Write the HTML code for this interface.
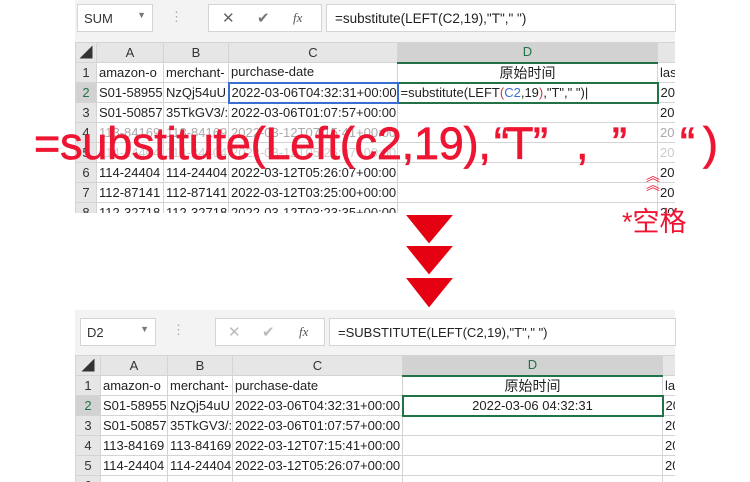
<!DOCTYPE html>
<html><head><meta charset="utf-8"><style>
*{margin:0;padding:0;box-sizing:border-box}
body{width:750px;height:482px;background:#fff;position:relative;overflow:hidden;font-family:"Liberation Sans","Noto Sans CJK SC",sans-serif;font-size:13px;color:#222}
.a{position:absolute}
.fb{background:#f3f3f3}
.box{position:absolute;background:#fff;border:1px solid #d4d4d4}
.clip{position:absolute;overflow:hidden}
.grid{position:absolute;left:0;border-collapse:collapse;table-layout:fixed}
.grid td{border:1px solid #d4d4d4;height:20px;padding:0 2px;white-space:nowrap;overflow:hidden;font-size:13px;line-height:18px}
.grid tr.h td{background:#e6e6e6;text-align:center;color:#333}
.grid td.rh{background:#e6e6e6;text-align:center;color:#333;padding:0}
.red{color:#ee1533;position:absolute;font-size:45px;line-height:56px;white-space:nowrap;top:116px;-webkit-text-stroke:0.7px #ee1533}
</style></head><body>
<!-- top -->
<div class="a fb" style="left:75px;top:0;width:600px;height:42px"></div>
<div class="box" style="left:77px;top:4px;width:76px;height:28px;padding:6px 6px;color:#333">SUM<span style="position:absolute;right:6px;top:5px;font-size:9px;color:#777">▼</span></div>
<div class="a" style="left:170px;top:9px;color:#aaa">⋮</div>
<div class="box" style="left:208px;top:4px;width:114px;height:28px"><span class="a" style="left:13px;top:4px;font-size:15px;color:#666">✕</span><span class="a" style="left:48px;top:4px;font-size:15px;color:#777">✔</span><span class="a" style="left:84px;top:5px;font-style:italic;font-family:'Liberation Serif',serif;color:#555">fx</span></div>
<div class="box" style="left:326px;top:4px;width:350px;height:28px;padding:6px 8px;font-size:13.5px">=substitute(LEFT(C2,19),"T"," ")</div>
<div class="clip" style="left:75px;top:42px;width:600px;height:171px">
<table class="grid" style="top:0;width:640px">
<col style="width:21px"><col style="width:67px"><col style="width:65px"><col style="width:169px"><col style="width:260px"><col style="width:58px">
<tr class="h"><td>◢</td><td>A</td><td>B</td><td>C</td><td style="background:#d2d2d2;border-bottom:2px solid #217346;color:#217346">D</td><td></td></tr>
<tr><td class="rh">1</td><td>amazon-o</td><td>merchant-</td><td>purchase-date</td><td style="text-align:center;font-size:14px">原始时间</td><td>las</td></tr>
<tr><td class="rh" style="background:#d2d2d2;color:#217346">2</td><td>S01-58955</td><td>NzQj54uU</td><td style="border:2px solid #3a6fd1">2022-03-06T04:32:31+00:00</td><td style="border:2px solid #217346">=substitute(LEFT<span style="color:#d2344a">(</span><span style="color:#3a6fd1">C2</span>,19<span style="color:#d2344a">)</span>,"T"," ")|</td><td>202</td></tr>
<tr><td class="rh">3</td><td>S01-50857</td><td>35TkGV3/:</td><td>2022-03-06T01:07:57+00:00</td><td></td><td>202</td></tr>
<tr style="color:#aaa"><td class="rh">4</td><td>113-84169</td><td>113-84169</td><td>2022-03-12T07:15:41+00:00</td><td></td><td>202</td></tr>
<tr style="color:#ccc"><td class="rh">5</td><td>114-24404</td><td>114-24404</td><td>2022-03-12T05:26:07+00:00</td><td></td><td>202</td></tr>
<tr><td class="rh">6</td><td>114-24404</td><td>114-24404</td><td>2022-03-12T05:26:07+00:00</td><td></td><td>202</td></tr>
<tr><td class="rh">7</td><td>112-87141</td><td>112-87141</td><td>2022-03-12T03:25:00+00:00</td><td></td><td>202</td></tr>
<tr><td class="rh">8</td><td>112-32718</td><td>112-32718</td><td>2022-03-12T03:23:35+00:00</td><td></td><td>202</td></tr>
</table></div>
<div class="red" style="left:34px;letter-spacing:-0.2px">=substitute(Left(c2,19),</div>
<div class="red" style="left:494px">“</div>
<div class="red" style="left:506px">T</div>
<div class="red" style="left:533px">”</div>
<div class="red" style="left:576px">,</div>
<div class="red" style="left:612px">”</div>
<div class="red" style="left:680px">“</div>
<div class="red" style="left:703px">)</div>
<div class="a" style="left:646px;top:172px;font-size:14px;line-height:9px;color:#ee1533">︽<br>︽</div>
<div class="a" style="left:622px;top:204px;font-size:27px;line-height:36px;color:#ee1533">*空格</div>
<svg class="a" style="left:403px;top:214px" width="54" height="96" viewBox="0 0 54 96">
<g fill="#e50012" stroke="#fff" stroke-width="2"><polygon points="1,0 52,0 26,31"/><polygon points="1,31 52,31 26,62"/><polygon points="1,63 52,63 26,95"/></g></svg>
<!-- bottom -->
<div class="a fb" style="left:75px;top:310px;width:600px;height:46px"></div>
<div class="box" style="left:80px;top:318px;width:76px;height:28px;padding:6px 6px;color:#333">D2<span style="position:absolute;right:6px;top:5px;font-size:9px;color:#777">▼</span></div>
<div class="a" style="left:172px;top:322px;color:#aaa">⋮</div>
<div class="box" style="left:215px;top:318px;width:110px;height:28px"><span class="a" style="left:12px;top:4px;font-size:15px;color:#bbb">✕</span><span class="a" style="left:46px;top:4px;font-size:15px;color:#bbb">✔</span><span class="a" style="left:83px;top:5px;font-style:italic;font-family:'Liberation Serif',serif;color:#555">fx</span></div>
<div class="box" style="left:329px;top:318px;width:347px;height:28px;padding:6px 8px">=SUBSTITUTE(LEFT(C2,19),"T"," ")</div>
<div class="clip" style="left:75px;top:355px;width:600px;height:127px">
<table class="grid" style="top:0;width:640px;background:#fff">
<col style="width:25px"><col style="width:67px"><col style="width:65px"><col style="width:170px"><col style="width:260px"><col style="width:53px">
<tr class="h"><td>◢</td><td>A</td><td>B</td><td>C</td><td style="background:#d2d2d2;border-bottom:2px solid #217346;color:#217346">D</td><td></td></tr>
<tr><td class="rh">1</td><td>amazon-o</td><td>merchant-</td><td>purchase-date</td><td style="text-align:center;font-size:14px">原始时间</td><td>las</td></tr>
<tr><td class="rh" style="background:#d2d2d2;color:#217346">2</td><td>S01-58955</td><td>NzQj54uU</td><td>2022-03-06T04:32:31+00:00</td><td style="border:2px solid #217346;text-align:center">2022-03-06 04:32:31</td><td>202</td></tr>
<tr><td class="rh">3</td><td>S01-50857</td><td>35TkGV3/:</td><td>2022-03-06T01:07:57+00:00</td><td></td><td>202</td></tr>
<tr><td class="rh">4</td><td>113-84169</td><td>113-84169</td><td>2022-03-12T07:15:41+00:00</td><td></td><td>202</td></tr>
<tr><td class="rh">5</td><td>114-24404</td><td>114-24404</td><td>2022-03-12T05:26:07+00:00</td><td></td><td>202</td></tr>
<tr><td class="rh">6</td><td></td><td></td><td></td><td></td><td></td></tr>
</table></div>
</body></html>
